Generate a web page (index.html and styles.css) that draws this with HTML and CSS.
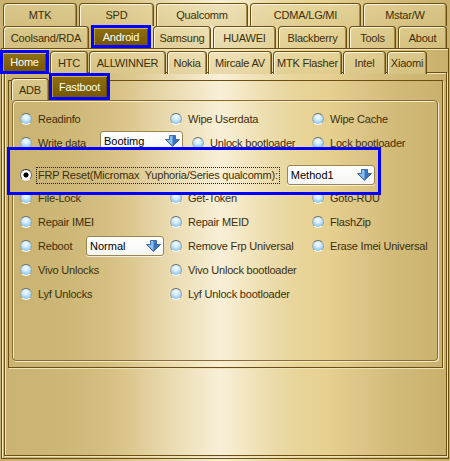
FILE: index.html
```html
<!DOCTYPE html>
<html lang="en">
<head>
<meta charset="utf-8">
<title>Fastboot</title>
<link rel="stylesheet" href="styles.css">
</head>
<body>
<div class="window">
  <div class="tabrow r1">
    <div class="tab">MTK</div>
    <div class="tab">SPD</div>
    <div class="tab">Qualcomm</div>
    <div class="tab">CDMA/LG/MI</div>
    <div class="tab">Mstar/W</div>
  </div>
  <div class="tabrow r2">
    <div class="tab">Coolsand/RDA</div>
    <div class="tab sel">Android</div>
    <div class="tab">Samsung</div>
    <div class="tab">HUAWEI</div>
    <div class="tab">Blackberry</div>
    <div class="tab">Tools</div>
    <div class="tab">About</div>
  </div>
  <div class="panel-main">
    <div class="tabrow r3">
      <div class="tab sel">Home</div>
      <div class="tab">HTC</div>
      <div class="tab">ALLWINNER</div>
      <div class="tab">Nokia</div>
      <div class="tab">Mircale AV</div>
      <div class="tab">MTK Flasher</div>
      <div class="tab">Intel</div>
      <div class="tab">Xiaomi</div>
    </div>
    <div class="panel-brand">
      <div class="panel-mode">
        <div class="tabrow r4">
          <div class="tab">ADB</div>
          <div class="tab sel">Fastboot</div>
        </div>
        <div class="group">
          <div class="opts">
            <div class="row">
              <label class="opt"><span class="radio"></span>Readinfo</label>
              <label class="opt"><span class="radio"></span>Wipe Userdata</label>
              <label class="opt"><span class="radio"></span>Wipe Cache</label>
            </div>
            <div class="row w">
              <label class="opt"><span class="radio"></span>Write data</label>
              <div class="combo"><span>Bootimg</span>
                <svg class="drop" width="15" height="12" viewBox="0 0 15 12"><path d="M4.5 .5h6v4h4l-7 7-7-7h4z" fill="#3a74bf" stroke="#2c5690" stroke-width=".8"/><path d="M5 1h2.5v9.6L1.6 5H5z" fill="#8cc0f0"/></svg>
              </div>
              <label class="opt"><span class="radio"></span>Unlock bootloader</label>
              <label class="opt"><span class="radio"></span>Lock bootloader</label>
            </div>
            <div class="frp">
              <span class="radio on"></span>
              <span class="focus">FRP Reset(Micromax&nbsp; Yuphoria/Series qualcomm):</span>
              <div class="combo"><span>Method1</span>
                <svg class="drop" width="15" height="12" viewBox="0 0 15 12"><path d="M4.5 .5h6v4h4l-7 7-7-7h4z" fill="#3a74bf" stroke="#2c5690" stroke-width=".8"/><path d="M5 1h2.5v9.6L1.6 5H5z" fill="#8cc0f0"/></svg>
              </div>
            </div>
            <div class="row">
              <label class="opt"><span class="radio"></span>File-Lock</label>
              <label class="opt"><span class="radio"></span>Get-Token</label>
              <label class="opt"><span class="radio"></span>Goto-RUU</label>
            </div>
            <div class="row">
              <label class="opt"><span class="radio"></span>Repair IMEI</label>
              <label class="opt"><span class="radio"></span>Repair MEID</label>
              <label class="opt"><span class="radio"></span>FlashZip</label>
            </div>
            <div class="row rb">
              <label class="opt"><span class="radio"></span>Reboot</label>
              <div class="combo"><span>Normal</span>
                <svg class="drop" width="15" height="12" viewBox="0 0 15 12"><path d="M4.5 .5h6v4h4l-7 7-7-7h4z" fill="#3a74bf" stroke="#2c5690" stroke-width=".8"/><path d="M5 1h2.5v9.6L1.6 5H5z" fill="#8cc0f0"/></svg>
              </div>
              <label class="opt"><span class="radio"></span>Remove Frp Universal</label>
              <label class="opt"><span class="radio"></span>Erase Imei Universal</label>
            </div>
            <div class="row">
              <label class="opt"><span class="radio"></span>Vivo Unlocks</label>
              <label class="opt"><span class="radio"></span>Vivo Unlock bootloader</label>
            </div>
            <div class="row">
              <label class="opt"><span class="radio"></span>Lyf Unlocks</label>
              <label class="opt"><span class="radio"></span>Lyf Unlock bootloader</label>
            </div>
          </div>
        </div>
      </div>
    </div>
  </div>
</div>
</body>
</html>
```
FILE: styles.css
```css
:root {
  --gold: linear-gradient(to right,
    #c9b272 0px, #cdb776 60px, #d3bd7f 100px, #dcc78e 130px,
    #e6d6a8 160px, #f2e7c7 200px, #f8efd7 220px, #f4e8c6 240px,
    #ecdcab 270px, #e8d498 300px, #e5d090 330px, #dcc586 360px,
    #d1ba78 400px, #c8b06b 450px);
  --ink: #3c2e0b;
  --edge: #6b4f12;
  --mark: #0000fe;
}

* { box-sizing: border-box; }

html, body { margin: 0; }

body {
  background: var(--gold);
  background-attachment: fixed;
  font: 11px "Liberation Sans", Arial, sans-serif;
  letter-spacing: -0.2px;
  color: var(--ink);
}

.window {
  width: 450px;
  height: 461px;
  overflow: hidden;
  display: flex;
  flex-direction: column;
}

/* tab strips */
.tabrow { display: grid; }

.r1 {
  margin: 3px 0 0 3px;
  height: 23px;
  grid-template-columns: 74px 75px 92px 111px 84px;
  column-gap: 2px;
}

.r2 {
  margin-left: 3px;
  height: 22px;
  grid-template-columns: 86px 60px 58px 63px 69px 47px 49px;
  column-gap: 2px;
}

.r3 {
  margin: 2px 0 0 -2px;
  height: 21px;
  grid-template-columns: 49px 38px 77px 40px 64px 69px 43px 40px;
  column-gap: 1px;
}

.r4 {
  margin-top: -3px;
  height: 22px;
  grid-template-columns: 38px 61px;
}

.tab {
  display: flex;
  align-items: center;
  justify-content: center;
  white-space: nowrap;
  border: 1px solid var(--edge);
  border-bottom: 0;
  border-radius: 4px 4px 0 0;
  background-image: linear-gradient(rgba(230, 215, 158, .55), rgba(218, 200, 138, .55)), var(--gold);
  background-attachment: scroll, fixed;
  box-shadow: inset 1px 1px 0 #fbf4d8, inset -1px 0 0 #a48a48;
}

.tab.sel {
  position: relative;
  z-index: 2;
  border: 3px solid var(--mark);
  border-radius: 0;
  background: linear-gradient(#8f6f10, #775800);
  color: #fff;
  box-shadow: inset 0 1px 0 #cdb46a, inset 1px 0 0 #b39848, inset -1px 0 0 #5d4500;
}

.r2 .sel { margin-top: -1px; height: 23px; }
.r3 .sel { margin-top: -1px; height: 24px; }
.r4 .sel { margin-top: -5px; height: 27px; }

/* nested panels */
.panel-main {
  flex: 1;
  margin: 0 1px 2px;
  border: 1px solid var(--edge);
  box-shadow: inset 1px 1px 0 #f2e6bf;
}

.panel-brand {
  margin-left: 2px;
  width: 443px;
  height: 384px;
  padding: 7px 0 0 3px;
  border: 1px solid var(--edge);
  box-shadow: inset 1px 1px 0 #f2e6bf, 1px 1px 0 #efe2b6;
}

.panel-mode {
  width: 435px;
  height: 288px;
  padding-left: 2px;
  border: 1px solid var(--edge);
  box-shadow: 1px 1px 0 #efe2b6;
}

.group {
  margin-left: 1px;
  width: 426px;
  height: 261px;
  padding-top: 6px;
  border: 1px solid #8a6d2c;
  border-radius: 4px;
  box-shadow: inset 1px 1px 0 #f5ead0, 1px 1px 0 #f5ead0;
}

/* option grid */
.row {
  display: grid;
  grid-template-columns: 150px 142px 1fr;
  align-items: center;
  height: 24px;
  padding-left: 7px;
}

.row.w { grid-template-columns: 80px 92px 120px 1fr; }
.row.rb { grid-template-columns: 66px 84px 142px 1fr; }

.opt {
  display: flex;
  align-items: center;
  white-space: nowrap;
}

.radio {
  flex: none;
  width: 12px;
  height: 12px;
  margin-right: 6px;
  border-radius: 50%;
  border: 1px solid;
  border-color: #6d6a5e #a9a69a #fbfaf4 #a9a69a;
  background: radial-gradient(circle at 50% 32%, #f6fcff 0, #d2ecff 35%, #92c9f0 72%, #6aaee4 100%);
}

.radio.on {
  border-color: #2e2e2e #6f6f6f #e8e8e8 #6f6f6f;
  background: radial-gradient(circle, #000 0, #000 2.2px, #fff 2.9px);
}

.combo {
  display: flex;
  align-items: center;
  justify-content: space-between;
  height: 20px;
  padding: 0 2px 0 3px;
  border: 1px solid #9b8550;
  border-radius: 3px;
  background: linear-gradient(#ffffff, #f5f5f3);
  box-shadow: 0 1px 0 rgba(255, 255, 255, .7);
  color: #000;
  letter-spacing: 0;
}

.row.w .combo { width: 83px; align-self: start; }
.row.rb .combo { width: 78px; }

.drop { flex: none; }

/* highlighted reset line */
.frp {
  position: relative;
  z-index: 1;
  display: flex;
  align-items: center;
  width: 374px;
  height: 48px;
  margin: -8px 0 -9px -6px;
  padding: 8px 0 0 10px;
  border: 3px solid var(--mark);
  background: var(--gold);
  background-attachment: fixed;
}

.frp .radio { margin-right: 4px; }

.focus {
  border: 1px dotted #222;
  padding: 0 1px;
  line-height: 15px;
  white-space: nowrap;
}

.frp .combo { margin-left: 7px; width: 88px; }
```
